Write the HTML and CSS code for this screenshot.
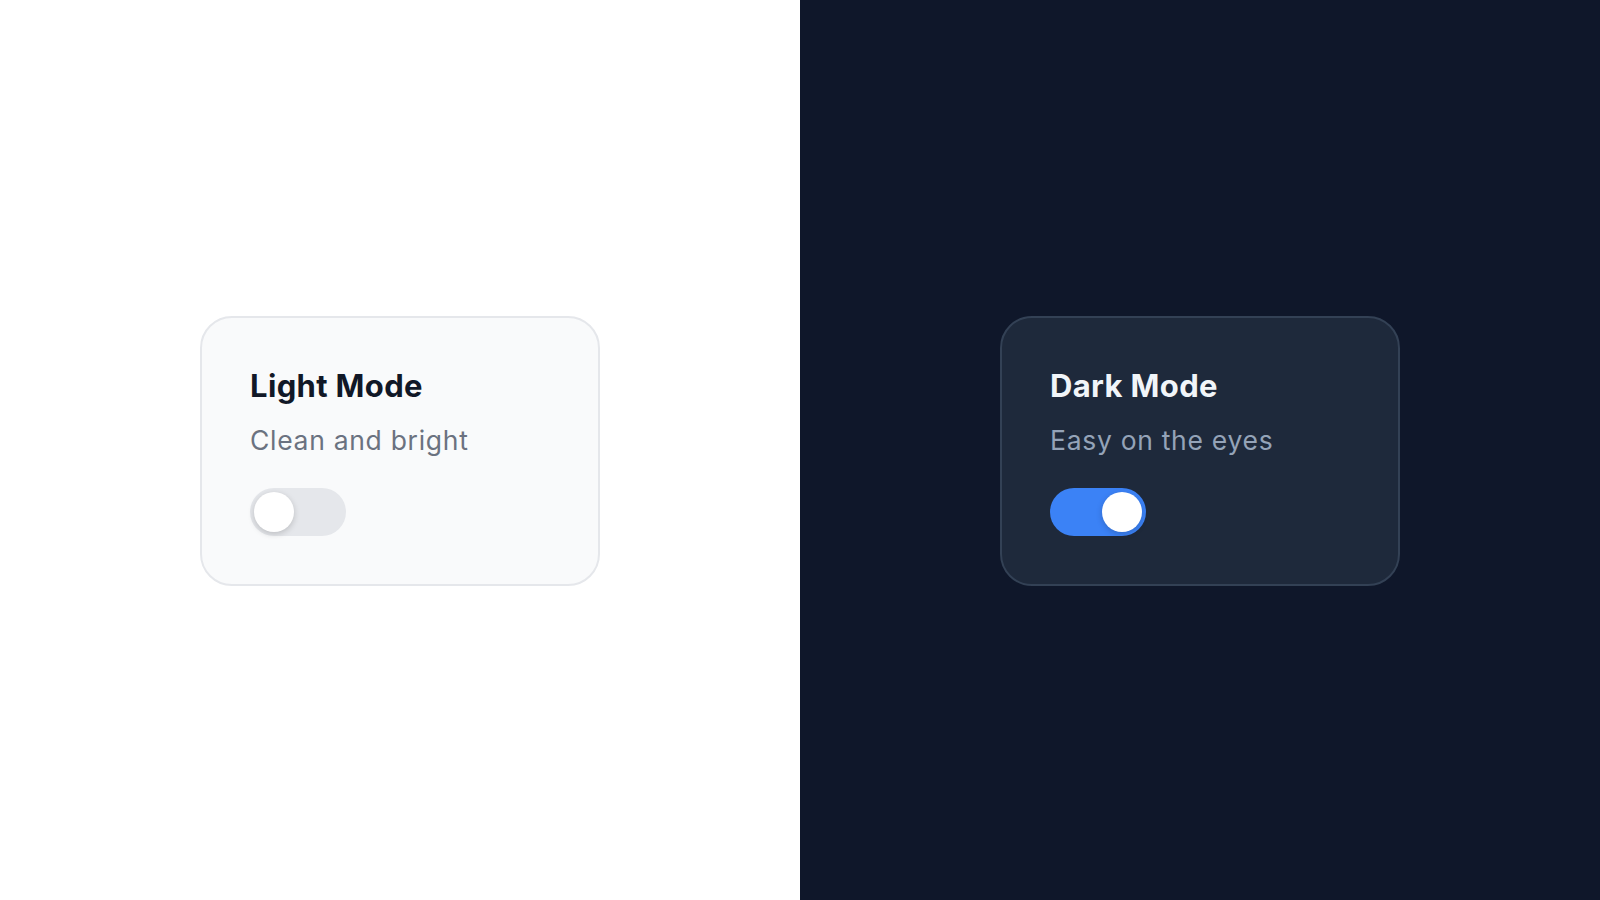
FILE: index.html
```html
<!DOCTYPE html>
<html lang="en">
<head>
<meta charset="utf-8">
<title>Theme Toggle</title>
<link rel="stylesheet" href="styles.css">
</head>
<body>
<main class="split">
  <section class="half half-light">
    <div class="card card-light">
      <h2 class="card-title">Light Mode</h2>
      <p class="card-sub">Clean and bright</p>
      <div class="toggle toggle-off" role="switch" aria-checked="false"><span class="knob"></span></div>
    </div>
  </section>
  <section class="half half-dark">
    <div class="card card-dark">
      <h2 class="card-title">Dark Mode</h2>
      <p class="card-sub">Easy on the eyes</p>
      <div class="toggle toggle-on" role="switch" aria-checked="true"><span class="knob"></span></div>
    </div>
  </section>
</main>
</body>
</html>
```
FILE: styles.css
```css
* { box-sizing: border-box; }
html, body { margin: 0; padding: 0; }
body {
  font-family: Inter, "Noto Sans", sans-serif;
  font-optical-sizing: none;
  font-variation-settings: "opsz" 14;
  width: 1600px;
  height: 900px;
  overflow: hidden;
}
.split {
  display: grid;
  grid-template-columns: 1fr 1fr;
  height: 900px;
}
.half {
  display: flex;
  align-items: center;
  justify-content: center;
  padding-top: 2px;
}
.half-light { background: #ffffff; }
.half-dark { background: #0f172a; }
.card {
  width: 400px;
  border-radius: 32px;
  border: 2px solid;
  padding: 48px;
  display: flex;
  flex-direction: column;
}
.card-light { background: #f9fafb; border-color: #e5e7eb; }
.card-dark { background: #1e293b; border-color: #334155; }
.card-title {
  margin: 0;
  font-size: 31px;
  line-height: 40px;
  font-weight: 700;
  letter-spacing: 0.35px;
}
.card-sub {
  margin: 18px 0 32px;
  font-size: 26.5px;
  line-height: 32px;
  font-weight: 400;
  letter-spacing: 0.7px;
}
.card-light .card-title { color: #111827; }
.card-light .card-sub { color: #6b7280; }
.card-dark .card-title { color: #f1f5f9; }
.card-dark .card-sub { color: #94a3b8; }
.toggle {
  width: 96px;
  height: 48px;
  flex: none;
  border-radius: 24px;
  padding: 4px;
  display: flex;
}
.toggle-off { background: #e5e7eb; justify-content: flex-start; }
.toggle-on { background: #3b82f6; justify-content: flex-end; }
.knob {
  width: 40px;
  height: 40px;
  border-radius: 50%;
  background: #ffffff;
  box-shadow: 0 2px 6px rgba(0, 0, 0, 0.18);
}
```
